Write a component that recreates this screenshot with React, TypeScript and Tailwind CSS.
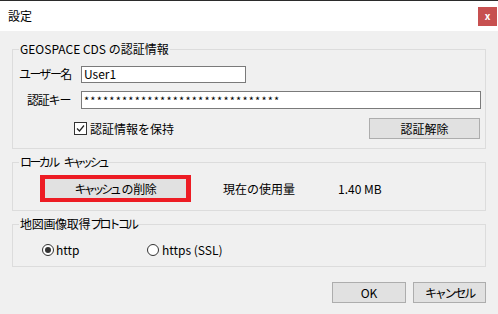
import type { ReactNode } from "react";

const font = { fontFamily: '"Noto Sans CJK JP", "Noto Sans", sans-serif' };

function Group({ title, className, children }: { title: ReactNode; className: string; children: ReactNode }) {
  return (
    <div className={`flex flex-col border border-[#dcdcdc] ${className}`}>
      <span className="-mt-[9px] ml-[6px] self-start bg-[#f0f0f0] px-[1px] text-[12px] leading-[16px]">{title}</span>
      {children}
    </div>
  );
}

function Button({ children, className }: { children: ReactNode; className: string }) {
  return (
    <div className={`flex items-center justify-center border border-[#adadad] bg-[#e1e1e1] text-[12px] ${className}`}>
      {children}
    </div>
  );
}

export default function App() {
  return (
    <div className="flex h-[314px] w-[498px] flex-col bg-[#f0f0f0] text-black" style={font}>
      <div className="flex h-[31px] items-center justify-between border-t border-[#2b2b2b] bg-white pl-[8px] pr-[1px]">
        <span className="text-[12px]">設定</span>
        <div className="flex h-[19px] w-[19px] items-center justify-center bg-[#c75050] text-[10px] font-bold leading-none text-white">
          x
        </div>
      </div>

      <div className="flex flex-col px-[12px]">
        <Group title="GEOSPACE CDS の認証情報" className="mt-[18px] h-[100px]">
          <div className="mt-[8px] flex items-center">
            <span className="ml-[6px] w-[62px] text-[12px] tracking-[-1.6px]">ユーザー名</span>
            <div className="flex h-[17px] w-[165px] items-center border border-[#7a7a7a] bg-white pl-[2px] text-[12px]">
              User1
            </div>
          </div>
          <div className="mt-[8px] flex items-center">
            <span className="ml-[14px] w-[54px] text-[12px] tracking-[-1.2px]">認証キー</span>
            <div className="mr-[4px] flex h-[18px] flex-1 items-center border border-[#7a7a7a] bg-white pl-[2px] text-[11px] tracking-[1.2px]">
              *******************************
            </div>
          </div>
          <div className="mt-[9px] flex items-center justify-between">
            <div className="ml-[61px] flex items-center gap-[3px]">
              <div className="flex h-[13px] w-[13px] items-center justify-center border border-[#333] bg-white">
                <svg width="9" height="9" viewBox="0 0 9 9">
                  <path d="M1 4.5 L3.5 7 L8 1.5" fill="none" stroke="#222" strokeWidth="1.2" />
                </svg>
              </div>
              <span className="text-[12px]">認証情報を保持</span>
            </div>
            <Button className="mr-[5px] h-[21px] w-[111px]">認証解除</Button>
          </div>
        </Group>

        <Group
          title={
            <>
              <span className="tracking-[-2.6px]">ローカル</span>
              <span className="ml-[6px] tracking-[-3.4px]">キャッシュ</span>
            </>
          }
          className="mt-[13px] h-[49px]"
        >
          <div className="mt-[5px] flex items-center">
            <div className="ml-[27px] border-x-[5px] border-y-[4px] border-[#ed1c24]">
              <div className="flex h-[19px] w-[141px] items-center justify-center bg-[#e1e1e1] text-[12px]">
                <span className="tracking-[-3.2px]">キャッシュ</span>
                <span className="ml-[3px] tracking-[-0.4px]">の削除</span>
              </div>
            </div>
            <span className="ml-[32px] text-[12px]">現在の使用量</span>
            <span className="ml-[43px] text-[12px]">1.40 MB</span>
          </div>
        </Group>

        <Group
          title={
            <>
              <span className="tracking-[-0.3px]">地図画像取得</span>
              <span className="tracking-[-2.8px]">プロトコル</span>
            </>
          }
          className="mt-[13px] h-[43px]"
        >
          <div className="mt-[9px] flex items-center">
            <div className="ml-[29px] flex w-[105px] items-center gap-[2px]">
              <div className="flex h-[12px] w-[12px] items-center justify-center rounded-full border border-[#333] bg-white">
                <div className="h-[6px] w-[6px] rounded-full bg-[#333]" />
              </div>
              <span className="text-[12px]">http</span>
            </div>
            <div className="flex items-center gap-[3px]">
              <div className="h-[12px] w-[12px] rounded-full border border-[#333] bg-white" />
              <span className="text-[12px]">https (SSL)</span>
            </div>
          </div>
        </Group>

        <div className="mt-[15px] flex justify-end gap-[7px]">
          <Button className="h-[21px] w-[74px]">OK</Button>
          <Button className="h-[21px] w-[73px] tracking-[-2.2px]">キャンセル</Button>
        </div>
      </div>
    </div>
  );
}
